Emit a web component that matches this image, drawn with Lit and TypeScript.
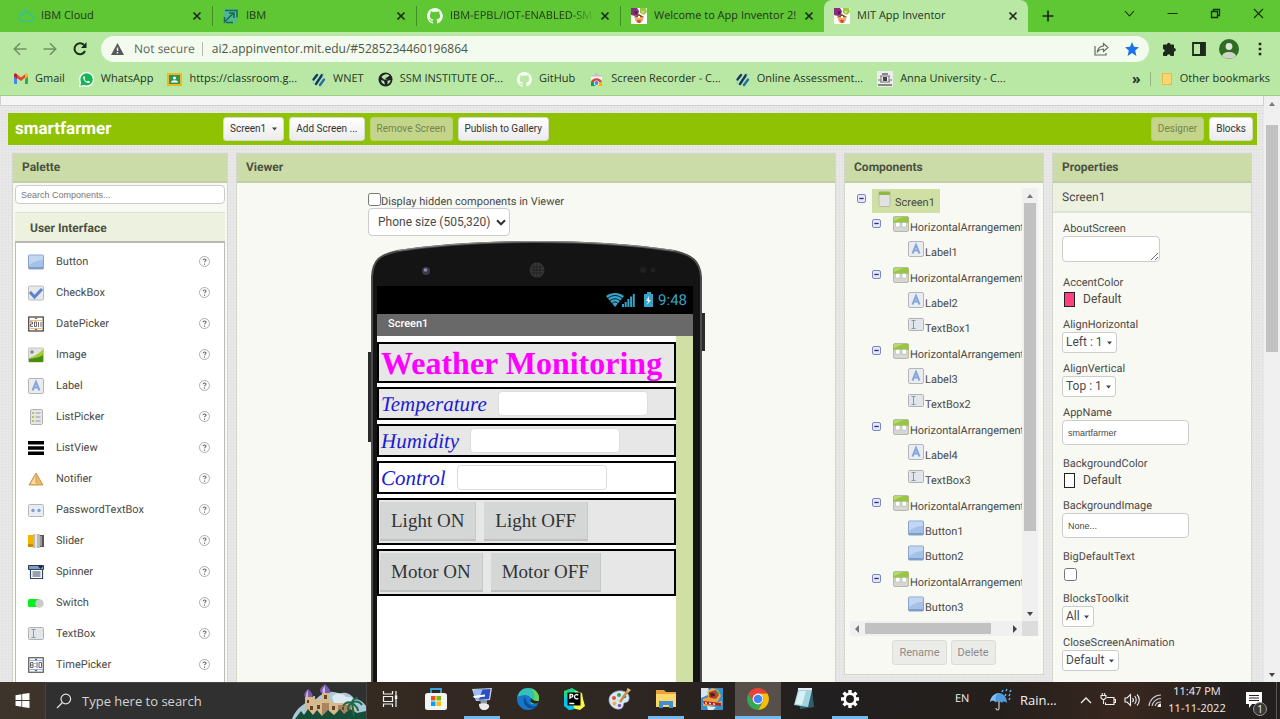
import { LitElement, html, svg, css } from "lit";
import { customElement, property } from "lit/decorators.js";
import { classMap } from "lit/directives/class-map.js";

const base = css`
  *, *::before, *::after { box-sizing: border-box; }
  button, input, select, textarea { font: inherit; color: inherit; margin: 0; }
  button { cursor: pointer; padding: 0; border: 0; background: none; }
  svg { display: block; flex: none; }
  a { color: inherit; text-decoration: none; }
  ul { list-style: none; margin: 0; padding: 0; }
  h1, h2, h3 { margin: 0; }
`;

const panel = css`
  :host {
    display: flex; flex-direction: column; min-width: 0;
    font: 11px/15px Roboto, sans-serif; color: #4a4a48; text-rendering: geometricPrecision;
    background: #f8f9f3; border: 1px solid #d3d6c8;
  }
  .title {
    flex: none; height: 29px; padding: 0 9px; font-size: 12px; line-height: 27px; font-weight: 700;
    background: #ccdca8; border-bottom: 2px solid #c3cfac; color: #4b5140;
  }
`;

const box = (size: number, view: string, body: unknown, h = size) =>
  html`<svg width=${size} height=${h} viewBox=${view} fill="none" aria-hidden="true">${body}</svg>`;

const octocat = (fill: string) => svg`<path fill=${fill} d="M8 0C3.6 0 0 3.6 0 8c0 3.5 2.300 6.500 5.500 7.600.4.100.500-.200.500-.400v-1.500c-2.200.500-2.700-.900-2.700-.900-.400-.900-.900-1.200-.900-1.200-.700-.500.100-.500.100-.500.800.100 1.200.800 1.200.800.700 1.200 1.900.900 2.300.700.100-.500.300-.900.500-1.100-1.800-.200-3.600-.900-3.600-4 0-.900.300-1.600.800-2.100-.100-.200-.400-1 .100-2.100 0 0 .700-.200 2.200.800a7.500 7.500 0 0 1 4 0c1.500-1 2.200-.800 2.200-.800.400 1.100.200 1.900.100 2.100.500.600.800 1.300.800 2.100 0 3.100-1.900 3.700-3.700 3.900.300.300.600.800.600 1.500v2.200c0 .200.100.500.600.400A8 8 0 0 0 8 0z"/>`;

const inventor = svg`<path fill="#fff" d="M0 0h16v16H0z"/><path fill="#8b2c7d" d="M0 0h6l2 3-1 4-3 1-4-1z"/><path fill="#9cc83c" d="M9 0h6l1 4-3 3-4-2z"/><path fill="#4d1c55" d="M3 3l4 1-2 3z"/><path fill="#c9dd8a" d="M10 3h4l-2 3z"/><path fill="#8a4a26" d="M3 9l5-3 5 3-1 1H4z"/><path fill="#f2a36a" d="M4 9h8v3l-2 3H6l-2-3z"/><path fill="#c4552b" d="M6 12h4l-1 3H7z"/><path fill="#fff" d="M7 8h2v2H7z"/>`;

const stripes = svg`<path stroke="#143a63" stroke-width="2.400" stroke-linecap="round" d="M2.500 7.500l3.500-4.500M5 12l6-9"/><path stroke="#2a6ca8" stroke-width="2.400" stroke-linecap="round" d="M9 13l4-5.500"/><path stroke="#8fd0e8" stroke-width="1.500" stroke-linecap="round" d="M2 11l1-1M12 3l1-1"/>`;

const icons: Record<string, unknown> = {
  cloud: box(16, "0 0 16 16", svg`<path stroke="#2fc39a" stroke-width="1.500" d="M4 13h8a3 3 0 0 0 .500-6A4.500 4.500 0 0 0 4 6.500 3.300 3.300 0 0 0 4 13z"/><path stroke="#39b6c9" d="M2 4l2 1M6 1l1 2M1 8h1"/>`),
  ibm: box(16, "0 0 16 16", svg`<path fill="#52b98a" d="M1 1h14v14H1z"/><path stroke="#176a5c" stroke-width="1.500" d="M2 2.500h12v7M3 14.500h7M1.500 9v5l9-9M6 5h5v5"/>`),
  octocatWhite: box(16, "0 0 16 16", octocat("#f4fff0")),
  inventor: box(16, "0 0 16 16", inventor),
  gmail: box(14, "0 0 14 14", svg`<path fill="#4285f4" d="M0 3.500h3V12H1a1 1 0 0 1-1-1z"/><path fill="#34a853" d="M11 4h3v7a1 1 0 0 1-1 1h-2z"/><path fill="#ea4335" d="M0 3c0-1.500 1.700-2 2.600-1L7 5.500 11.400 2C12.400 1.200 14 2 14 3.300L7 9 0 4z"/><path fill="#c5221f" d="M0 3c0-1 .800-1.600 1.800-1.500L3 2.300V7L0 4.600z"/><path fill="#fbbc04" d="M14 3c0-1-.800-1.600-1.800-1.500L11 2.300V7l3-2.400z"/>`),
  whatsapp: box(15, "0 0 15 15", svg`<circle cx="7.500" cy="7.500" r="7.500" fill="#fff"/><path fill="#fff" d="M0 15l1-5 4 4z"/><circle cx="7.600" cy="7.400" r="6.200" fill="#16b457"/><path fill="#16b457" d="M1.300 13.700l1-4 3 3z"/><path fill="#fff" d="M5.200 4c-.800.200-1.300 1.200-1 2.300.600 2.100 2.400 4 4.500 4.700 1 .300 2.200-.200 2.400-1.300l-2-1-.900.900C7.100 9.200 6 8.100 5.500 6.900l.700-.800z"/>`),
  classroom: box(15, "0 0 15 15", svg`<path fill="#f3b71b" d="M0 1h15v13H0z"/><path fill="#2d9557" d="M2 3h11v9H2z"/><circle cx="7.500" cy="6" r="1.500" fill="#fff"/><path fill="#fff" d="M4 10.500c0-3 7-3 7 0z"/>`),
  stripes: box(15, "0 0 15 15", stripes),
  globe: box(15, "0 0 15 15", svg`<circle cx="7.500" cy="7.500" r="7" fill="#202124"/><path fill="#b9e8a5" d="M7 2.500c2-.500 3.500 0 4.500 1L9 5.500 7 6l2 1.500H6L3.500 5c.500-1.200 2-2 3.500-2.500zM3 8l3 1 1 3.500C4.800 12 3.300 10.500 3 8zM12.500 8c0 2-1.500 3.800-3.500 4.300L10 10l-1-1z"/>`),
  octocat: box(15, "0 0 16 16", octocat("#f8fff5")),
  recorder: box(15, "0 0 15 15", svg`<path fill="#f1f1f1" d="M2 3h11v11H2z"/><path fill="#c4c4c4" d="M2 3h11v1.500H2zM6 1h3v2H6z"/><path fill="#db4437" d="M2 10c1-5 10-5 11 0z"/><path fill="#f4b400" d="M8 10h5v4H8z"/><path fill="#0f9d58" d="M2 10h5v4H2z"/><circle cx="7.500" cy="11" r="2.600" fill="#fff"/><circle cx="7.500" cy="11" r="1.900" fill="#4285f4"/>`),
  anna: box(16, "0 0 16 16", svg`<path fill="#ececec" d="M0 0h16v16H0z"/><path fill="#888" d="M5 2h6v2H5zM1 13h14v2H1z"/><path stroke="#777" d="M3 5h10M3 11h10M4 5v6M12 5v6M1 9h3M12 9h3"/><path fill="#444" d="M6 6h4v4H6z"/>`),
  folder: box(12, "0 0 12 14", svg`<path fill="#fbd671" d="M1 1h10v12H1z"/><path stroke="#eab844" d="M1.500 1.500h9v11h-9z"/><path fill="#eab844" d="M8 13l3-3v3z"/>`, 14),
  close: box(10, "0 0 10 10", svg`<path stroke="#1f2a1b" stroke-width="1.700" d="M1.500 1.500l7 7M8.500 1.500l-7 7"/>`),
  plus: box(12, "0 0 12 12", svg`<path stroke="#1c2a16" stroke-width="1.700" d="M6 .500v11M.500 6h11"/>`),
  chevron: box(11, "0 0 11 11", svg`<path stroke="#153007" stroke-width="1.100" d="M1 3l4.500 5L10 3"/>`),
  minimise: box(11, "0 0 11 11", svg`<path stroke="#153007" d="M.500 5.500h10"/>`),
  restore: box(11, "0 0 11 11", svg`<path stroke="#153007" stroke-width="1.300" d="M1.500 3.500h6v6h-6zM3.500 3V1.500h6v6H8"/>`),
  shut: box(11, "0 0 11 11", svg`<path stroke="#153007" stroke-width="1.100" d="M1 1l9 9M10 1l-9 9"/>`),
  back: box(14, "0 0 14 14", svg`<path stroke="#6f9363" stroke-width="1.600" d="M13.500 7H1.500M7 1.300L1.300 7 7 12.700"/>`),
  forward: box(14, "0 0 14 14", svg`<path stroke="#6f9363" stroke-width="1.600" d="M.500 7h12M7 1.300L12.700 7 7 12.700"/>`),
  reload: box(14, "0 0 14 14", svg`<path stroke="#1d2b19" stroke-width="2" d="M12 9a5.500 5.500 0 1 1-1-6"/><path fill="#1d2b19" d="M13.500 0v6H8z"/>`),
  warn: box(13, "0 0 13 12", svg`<path fill="#55595a" d="M6.500 0L13 12H0z"/><path fill="#f3fbee" d="M5.800 4.500h1.400v3.500H5.800zM5.800 9h1.400v1.400H5.800z"/>`, 12),
  share: box(15, "0 0 15 15", svg`<path stroke="#5f6a5d" stroke-width="1.200" d="M1 5v9h11v-2M3.500 10.500C4 7 6 5.300 9.500 5V2.500l4.500 4-4.500 4V8c-2.500 0-4.500.700-6 2.500z"/>`),
  star: box(14, "0 0 14 14", svg`<path fill="#1a73e8" d="M7 0l2 4.800 5 .400-3.800 3.300L11.400 14 7 11.100 2.600 14l1.200-5.500L0 5.200l5-.400z"/>`),
  puzzle: box(14, "0 0 14 14", svg`<path fill="#1d2a1b" d="M5 2.500a1.700 1.700 0 0 1 3.400 0H11c.600 0 1 .400 1 1v2.400a1.700 1.700 0 0 1 0 3.700V13c0 .500-.400 1-1 1H8.500a1.700 1.700 0 0 0-3.500 0H2c-.600 0-1-.500-1-1v-2.600c2.200 0 2.200-3.400 0-3.400V3.500c0-.600.400-1 1-1z"/>`),
  side: box(14, "0 0 14 14", svg`<path stroke="#1d2a1b" stroke-width="1.800" d="M1 1h12v12H1z"/><path fill="#1d2a1b" d="M8 1h5v12H8z"/>`),
  avatar: box(20, "0 0 20 20", svg`<circle cx="10" cy="10" r="10" fill="#2f6d23"/><circle cx="10" cy="7.500" r="3.400" fill="#dfe4dc"/><path fill="#cdd5c9" d="M3 17c1-5.500 13-5.500 14 0a10 10 0 0 1-14 0z"/>`),
  dots: box(4, "0 0 4 14", svg`<path fill="#1d2a1b" d="M.700.700h2.600v2.600H.700zM.700 5.700h2.600v2.600H.700zM.700 10.700h2.600v2.600H.700z"/>`, 14),

  button: box(16, "0 0 16 16", svg`<rect x=".5" y="1" width="15" height="14" rx="1" fill="#a3c1e9" stroke="#8ba3c4"/><path fill="#c0d6f2" d="M1 1.500h14V6C9 6 5 8 1 11z"/><path fill="#7f9dc9" d="M1 13h14v2H1z"/>`),
  checkbox: box(16, "0 0 16 16", svg`<rect x=".5" y="1" width="15" height="14" rx="1" fill="#e5e8ed" stroke="#bdbdbd"/><path stroke="#5b84cb" stroke-width="3" d="M2 7l4.500 5L14 4"/>`),
  date: box(16, "0 0 16 16", svg`<rect x=".75" y="1" width="14.500" height="14" fill="#fff" stroke="#44362e" stroke-width="1.200"/><path stroke="#efb684" d="M1.500 4.500h13M1.500 12.500h13"/><path fill="#7a4a20" d="M6.500 3L8 1.500 9.500 3zM6.500 13L8 14.500 9.500 13z"/><path stroke="#555" stroke-width=".9" d="M2 6h2.500v2H2.500v2.500H5M6.500 6v4.500h2V6zM10.500 6v5M13 6v5"/>`),
  image: box(16, "0 0 16 16", svg`<rect x=".5" y="1" width="15" height="14" rx="1" fill="#e3e3e3" stroke="#c4c4c4"/><path fill="#9fcc2f" d="M1 11C5 10 9 8 15 2.500V15H1z"/><path fill="#4a8a0e" d="M1 12c5-1 10-1 14-4v7H1z"/><circle cx="4" cy="5" r="1.800" fill="#888"/>`),
  label: box(16, "0 0 16 16", svg`<rect x=".5" y=".5" width="15" height="15" rx="1.500" fill="#e9edf2" stroke="#b5b5b5"/><path stroke="#86a5d9" stroke-width="2" d="M4.500 12.500L8 4l3.500 8.500M6 9.500h4"/>`),
  listpicker: box(16, "0 0 16 16", svg`<rect x="2.500" y=".5" width="12" height="15" rx="1.500" fill="#e6e6e6" stroke="#b0b0b0"/><path stroke="#b7c65b" stroke-width="2" d="M4 4h2M4 8h2M4 12h2"/><path stroke="#9a9a9a" d="M7.500 4h5M7.500 8h5M7.500 12h5"/>`),
  listview: box(16, "0 0 16 16", svg`<path fill="#000" d="M0 1h16v3.500H0zM0 6.300h16v3.500H0zM0 11.500h16V15H0z"/>`),
  notifier: box(16, "0 0 16 16", svg`<path fill="#efb865" stroke="#b78646" stroke-width=".8" d="M8 2l7 12H1z"/><path fill="#f9dca4" d="M8 4v9H3z"/><path fill="#d9a055" d="M7.500 5h1.200v7H7.500z"/>`),
  password: box(16, "0 0 16 16", svg`<rect x=".5" y="2.500" width="15" height="12" rx="1" fill="#e8edf4" stroke="#b7b7b7"/><circle cx="5" cy="8.500" r="1.700" fill="#7d9fd6"/><circle cx="11" cy="8.500" r="1.700" fill="#7d9fd6"/>`),
  slider: box(16, "0 0 16 16", svg`<path fill="#f1b500" d="M0 2h6v12H0z"/><path fill="#c98c00" d="M0 11h6v3H0z"/><path fill="#555" d="M10 2h6v12h-6z"/><path fill="#999" d="M12 3h2v10h-2z"/><rect x="5" y="1" width="7" height="14" rx="1" fill="#b9b9b9"/><path fill="#e8e8e8" d="M7 1h2v14H7z"/>`),
  spinner: box(16, "0 0 16 16", svg`<path fill="#7f9dc4" stroke="#27384f" d="M.500 1.500h15v4H.500z"/><path fill="#15253c" d="M10 2h5l-2.500 3z"/><path fill="#fff" stroke="#33465f" stroke-width="1.200" d="M2.500 5.500h12v9h-12z"/><path stroke="#33465f" d="M4.500 8h8M4.500 10h8M4.500 12h8"/>`),
  switch: box(16, "0 0 16 16", svg`<rect y="4" width="12" height="8" rx="1.500" fill="#07f01c"/><circle cx="11.500" cy="8.500" r="4.300" fill="#c9cbc9"/>`),
  textbox: box(16, "0 0 16 16", svg`<rect x=".5" y="1.500" width="15" height="12" rx="1" fill="#e2e5e9" stroke="#b2b2b2"/><path stroke="#8a9ab0" d="M3.500 3.500h4M5.500 3.500v8M3.500 11.500h4"/>`),
  time: box(16, "0 0 16 16", svg`<rect x=".75" y=".75" width="14.500" height="14.500" fill="#fff" stroke="#555" stroke-width="1.200"/><path stroke="#8db1df" d="M1.500 3.500h13M1.500 12.500h13"/><path fill="#456" d="M6.500 3L8 1.500 9.500 3zM6.500 13L8 14.500 9.500 13z"/><path stroke="#555" stroke-width=".9" d="M2.500 5.500h2.500v5H2.500zM2.500 8H5M7 6v1M7 9v1M9 5v6M11 5.500h2.500v5H11z"/>`),
  arrangement: box(16, "0 0 16 16", svg`<rect x=".5" y=".5" width="15" height="15" rx="1.500" fill="#d6d6d6" stroke="#b5b9a8"/><path fill="#98c543" d="M.500 1h15v6H.500z"/><path fill="#b6da6d" d="M1 1h9L1 5z"/><path fill="#fff" stroke="#b4b9a8" stroke-width=".6" d="M2.500 6.500h4.500v4.500H2.500zM9 6.500h4.500v4.500H9z"/>`),
  screen: box(16, "0 0 16 16", svg`<rect x="3" y=".5" width="11" height="15" rx="1" fill="#e2e2e2" stroke="#b8bda6"/><path fill="#8bbb3b" d="M3 1h11v3H3z"/>`),
  minus: box(9, "0 0 9 9", svg`<rect x=".5" y=".5" width="8" height="8" rx="1.500" fill="#e6e8fa" stroke="#7f86c6"/><path stroke="#2b2f8f" stroke-width="1.300" d="M2.300 4.500h4.400"/>`),
  help: box(11, "0 0 11 11", svg`<circle cx="5.500" cy="5.500" r="5" fill="#fff" stroke="#9a9a9a" stroke-width=".8"/><path stroke="#666" stroke-width="1.100" d="M4 4.300c.200-1.800 3.200-1.500 3 0-.100.900-1.400.900-1.400 2M5.500 7.500v1.200"/>`),
  caret: box(5, "0 0 5 4", svg`<path fill="#444" d="M0 .500h5L2.500 3.500z"/>`, 4),
  down: box(10, "0 0 10 7", svg`<path stroke="#333" stroke-width="2" d="M1 1.300l4 4 4-4"/>`, 7),

  start: box(15, "0 0 13 14", svg`<path fill="#fff" d="M0 2l5.500-.800v5.400H0zM6.200 1L13 0v6.600H6.200zM0 7.400h5.500v5.400L0 12zM6.200 7.400H13V14l-6.800-1z"/>`),
  search: box(16, "0 0 16 16", svg`<circle cx="9.800" cy="6" r="4.800" stroke="#e3e3e3" stroke-width="1.200"/><path stroke="#e3e3e3" stroke-width="1.200" d="M6.500 9.500L1 15"/>`),
  castle: box(76, "0 0 76 36", svg`<path fill="#a9c9d8" d="M2 36C6 25 16 18 26 16c8-8 16-9 24-5 4-3 12 0 14 5 6 0 9 3 12 7v13z"/><path fill="#dbeaf0" d="M42 14c4-5 10-5 14 0 6-1 9 3 9 6H44z"/><path fill="#d7b98c" d="M15 14h8v-1h2v4h7V9h7v9l6 2h16l5 4v9H15z"/><path fill="#a98561" d="M32 20h7v13h-7zM48 22h13v10H48z"/><path fill="#7a5bab" d="M18 6c-3 3-5 6-3 8h7c2-2-1-5-4-8zM35 1c-5 4-6 6-4 9h9c1-3-1-5-5-9z"/><path fill="#cbb4e6" d="M18 7c-2 3-2 5-2 7h2zM35 3c-3 3-3 5-2 7h2z"/><path fill="#5d4530" d="M17 17h2v3h-2zM34 12h3v4h-3zM20 23h3v4h-3zM27 22h3v4h-3zM42 23h3v4h-3zM52 24h2v3h-2z"/><path fill="#164d38" d="M5 36l6-8 3 4 4-6 5 6 4-5 5 6 6-6 6 5 6-6 4 5 6-5 7 4 9-2v8z"/><path stroke="#1a6a4c" stroke-width="2" d="M64 33l-2-13M62 20c-4-2-7 0-9 3M62 20c4-3 8-1 10 2M62 20c-3 1-4 4-4 7M62 20c3 2 6 5 6 8M62 20c0-3 3-5 6-5"/>`, 36),
  taskview: box(16, "0 0 16 16", svg`<path stroke="#f0f0f0" stroke-width="1.200" d="M1.500 0v3h9V0M1.500 16v-3h9v3M1.500 5.500h9v5h-9zM14 0v16"/><path fill="#f0f0f0" d="M12.800 4.500h2.500V8h-2.500z"/>`),
  store: box(22, "0 0 22 24", svg`<path stroke="#36a6e0" stroke-width="1.800" d="M6 8V2h10v6"/><rect y="6" width="22" height="17" rx="2.500" fill="#f3f3f3"/><path fill="#f25022" d="M6 9h4.500v4.500H6z"/><path fill="#7fba00" d="M11.500 9H16v4.500h-4.500z"/><path fill="#00a4ef" d="M6 14.500h4.500V19H6z"/><path fill="#ffb900" d="M11.500 14.500H16V19h-4.500z"/>`, 24),
  pc: box(24, "0 0 24 24", svg`<path fill="#cfd6e0" d="M2 2l20-1-2 12-14 1z"/><path fill="#2d4fc4" d="M3.500 3L20.500 2 19 12 7 13z"/><path fill="#9ac0ff" d="M3.500 3l9-.500L9 12.800H7z"/><path fill="#fff" d="M3 9l12-1.500v2L4 11z"/><path fill="#8e97a8" d="M10 13h7l0 4h-6z"/><path fill="#e9ebee" d="M9 17c3-1.500 8-1 10 1 1 3-2 5-5 5s-5-2-5-6z"/>`),
  edge: box(22, "0 0 22 22", svg`<circle cx="11" cy="11" r="11" fill="#1477c9"/><path fill="#35c1b5" d="M.500 9C2 3 6 0 11 0c7 0 11 5 11 10 0 4-3 6-6 6-2 0-3-1-2-3 1-3-2-6-6-6-3 0-6 1-7.500 2z"/><path fill="#6fd64a" d="M14 .500C19 2 22 6 22 10c0 4-3 6-6 6-2 0-2-1-2-2 5 0 5-8 0-13.500z"/><path fill="#0c4f9e" d="M8 9c-3 3-1 9 4 11 3 1 6 0 8-2-6 2-11-3-12-9z"/><path fill="#2a241f" d="M14 14c-1-1 0-2 0-4 3 3 4 3 8 3-1 3-5 4-8 1z"/>`),
  pycharm: box(22, "0 0 22 22", svg`<path fill="#21d789" d="M1 3l8-3 7 4-2 16-8 2-5-7z"/><path fill="#fcf84a" d="M12 3l7 2 1 6 2 7-5 4-8-2z"/><path fill="#07c3f2" d="M1 10l5 0 6 11-6 1-5-4z"/><path fill="#000" d="M4.500 4.500h13v13h-13z"/><path stroke="#fff" stroke-width="1.300" d="M7 11V6.500h1.500a1.300 1.300 0 0 1 0 2.700H7M15.300 7.200c-2-1.500-3.800-.300-3.800 1.500s2 3 3.800 1.500M6.300 15.500h5"/>`),
  paint: box(24, "0 0 24 24", svg`<path fill="#d9e8f3" stroke="#8fb1c9" stroke-width=".7" d="M10 4c7-1 12 3 11 8-.500 4-4 3-5 4s0 5-4 6C6 23 1 18 1 13S5 5 10 4z"/><circle cx="6" cy="11" r="2" fill="#e24a3b"/><circle cx="11" cy="8" r="2" fill="#3c9c4d"/><circle cx="16.500" cy="9.500" r="1.800" fill="#2f6fd0"/><circle cx="6.500" cy="16.500" r="2" fill="#f0b429"/><circle cx="11.500" cy="18.500" r="1.700" fill="#8d4cb5"/><path stroke="#c98a45" stroke-width="2.500" d="M12 15L21 2"/><path fill="#e8c07d" d="M19 1l4 2-3 3z"/>`),
  explorer: box(22, "0 0 22 20", svg`<path fill="#e8a33d" d="M1 1h8l2 2h10v5H1z"/><path fill="#fcd76a" d="M1 5h20v13H1z"/><path fill="#3f8fd2" d="M4 19v-7h14v7h-4v-3H8v3z"/>`, 20),
  game: box(22, "0 0 22 22", svg`<path fill="#3a8fc9" d="M0 0h22v22H0z"/><path fill="#d8e7ee" d="M0 0h7l2 6-9 4z"/><path fill="#e2b04a" d="M6 4l5-4 6 2 3 6-4 6-8-2z"/><path fill="#c43b2b" d="M8 4l7-2 3 5-3 4-7-1z"/><path fill="#3a2a22" d="M9 5l4 0 1 3-4 1z"/><path fill="#2f9a55" d="M15 2l3 3-2 3z"/><path fill="#e9a23c" d="M2 11l6-2 8 5 5-1v4l-19 1z"/><path fill="#b32121" d="M2 13l18 2v3L3 16z"/><path fill="#f6dfd2" d="M4 14l2 .500v1.500l-2-.500zM8 14.500l2 .500v1.500l-2-.500zM12 15l2 .500v1.500l-2-.500z"/><path fill="#dfe9ef" d="M6 18l9 1-3 3H7z"/>`),
  chrome: box(22, "0 0 22 22", svg`<path fill="#ea4335" d="M11 0a11 11 0 0 1 9.500 5.500H11L6.200 13.700 1.500 5.500A11 11 0 0 1 11 0z"/><path fill="#fbbc05" d="M20.500 5.500A11 11 0 0 1 11 22l4.800-8.300a5.500 5.500 0 0 0 0-5.500L11 5.500z"/><path fill="#34a853" d="M11 22A11 11 0 0 1 1.500 5.500l4.700 8.200a5.500 5.500 0 0 0 9.600 0z"/><circle cx="11" cy="11" r="5.400" fill="#fff"/><circle cx="11" cy="11" r="4.300" fill="#4285f4"/>`),
  notepad: box(22, "0 0 22 22", svg`<path fill="#2f5f6c" d="M6 2l13 0 2 17-14 2z"/><path fill="#9fd3dd" d="M5 2h14l-4 17-14-2z"/><path fill="#d9f0f4" d="M6 3h7L9 17l-7-1z"/><path fill="#e9eef0" d="M5 0h14v2H5z"/>`),
  gear: box(20, "0 0 20 20", svg`<circle cx="10" cy="10" r="5.300" stroke="#fff" stroke-width="2.600"/><path stroke="#fff" stroke-width="3.400" d="M10 1v3M10 16v3M1 10h3M16 10h3M3.600 3.600l2.200 2.200M14.200 14.200l2.200 2.200M3.600 16.400l2.200-2.200M14.200 5.800l2.200-2.200"/>`),
  umbrella: box(24, "0 0 24 24", svg`<path fill="#4e9be0" d="M1 14C2 7 7 5 10 5s8 3 8 10c-2-2-4-2-5 0-1-2-5-2-6-.500C5 12 3 12 1 14z"/><path fill="#83c0f2" d="M1 14C2 8 6 6 9 5c-3 3-3 6-2 9.500C5 12 3 12 1 14z"/><path stroke="#bcbcbc" stroke-width="1.300" d="M10 13v7c0 2.500-3 2.500-3 0"/><path stroke="#5eb4f5" stroke-width="1.500" d="M14 2l-1 2M18 1l-1 2M22 2l-1 2M17 6l-1 2M21 6l-1 2M21 10l-1 2"/>`),
  up: box(12, "0 0 12 8", svg`<path stroke="#f0f0f0" stroke-width="1.300" d="M1 7l5-5 5 5"/>`, 8),
  battery: box(16, "0 0 16 14", svg`<path stroke="#f0f0f0" stroke-width="1.100" d="M7 4.500h7v7H5.500V9.500M14 6.500h1.500v3H14M1 2.500h5V5L3.500 7 1 5zM2.300 2.500V0M4.700 2.500V0M3.500 7v4"/>`, 14),
  volume: box(16, "0 0 16 14", svg`<path stroke="#f0f0f0" stroke-width="1.100" d="M1 5h2l3.500-3.500v11L3 9H1zM8.500 5c1 1.200 1 3 0 4M10.700 3c2 2.200 2 5.800 0 8M13 1.500c3 3 3 8 0 11"/>`, 14),
  wifi: box(14, "0 0 14 14", svg`<path stroke="#cfcfcf" stroke-width="1.100" d="M1 13A12 12 0 0 1 13 2M4 13a9 9 0 0 1 9-7.500M7 13a6 6 0 0 1 6-4"/><path fill="#f0f0f0" d="M13 10.500V14H9.500A3.500 3.500 0 0 1 13 10.500z"/>`),
  note: box(18, "0 0 18 18", svg`<path fill="#fff" d="M1 1h16v12H7l-3 4v-4H1z"/><path stroke="#2a2523" stroke-width="1.200" d="M4 4.500h10M4 7h10M4 9.500h10"/>`),
};

@customElement("browser-chrome")
class BrowserChrome extends LitElement {
  static styles = [base, css`
    :host { display: block; flex: none; font: 12px/16px "Open Sans", sans-serif; color: #24331f; background: #b9e8a5; border-bottom: 1px solid #9fcb8d; text-rendering: geometricPrecision; }
    .tabs { display: flex; height: 32px; background: #5fc634; padding-left: 8px; }
    .tab { position: relative; flex: 0 1 204px; display: flex; align-items: center; padding: 0 10px; min-width: 0; }
    .tab + .tab { border-left: 1px solid #3f8f25; border-image: linear-gradient(transparent 7px, #3f8f25 7px 25px, transparent 25px) 1; }
    .name { flex: 1; margin-left: 7px; overflow: hidden; white-space: nowrap; font-size: 11px; }
    .name.long { margin-right: 6px; mask-image: linear-gradient(90deg, #000 85%, transparent); }
    .tab + .tab.active { background: #b9e8a5; border-radius: 8px 8px 0 0; border-image: none; border-left: 0; }
    .new { width: 40px; display: grid; place-items: center; }
    .window { margin-left: auto; display: flex; height: 27px; }
    .window button { width: 43px; display: grid; place-items: center; }
    .toolbar { display: flex; align-items: center; height: 33px; padding: 0 4px 0 5px; }
    .nav { width: 30px; display: grid; place-items: center; }
    .address { flex: 1; display: flex; align-items: center; height: 26px; margin: 0 5px 0 6px; padding: 0 10px; background: #f3fbee; border-radius: 13px; }
    .secure { font-size: 12px; color: #5c665a; padding: 0 7px 0 10px; white-space: nowrap; }
    .url { flex: 1; min-width: 0; border: 0; border-left: 1px solid #b4bcb0; height: 14px; padding: 0 9px; font-size: 12px; background: none; outline: 0; color: #4b5648; }
    .address .end { width: 30px; display: grid; place-items: center; }
    .address .end:last-child { width: 15px; margin-left: 8px; }
    .tool { width: 30px; display: grid; place-items: center; }
    .tool:last-child { width: 32px; }
    .marks { display: flex; align-items: center; height: 30px; padding: 0 10px 2px 14px; gap: 14px; white-space: nowrap; font-size: 11px; }
    .mark { display: flex; align-items: center; gap: 7px; }
    .more { margin-left: auto; font-size: 14px; font-weight: 700; padding-right: 9px; border-right: 1px solid #8fb880; line-height: 14px; }
    .other { margin-left: -4px; }
  `];
  tabs = [["cloud", "IBM Cloud"], ["ibm", "IBM"], ["octocatWhite", "IBM-EPBL/IOT-ENABLED-SMA"], ["inventor", "Welcome to App Inventor 2!"], ["inventor", "MIT App Inventor"]];
  marks = [["gmail", "Gmail"], ["whatsapp", "WhatsApp"], ["classroom", "https://classroom.g..."], ["stripes", "WNET"], ["globe", "SSM INSTITUTE OF..."], ["octocat", "GitHub"], ["recorder", "Screen Recorder - C..."], ["stripes", "Online Assessment..."], ["anna", "Anna University - C..."]];
  render() {
    return html`
      <div class="tabs">
        ${this.tabs.map(([icon, name], i) => html`
          <div class=${classMap({ tab: true, active: i === 4 })}>
            ${icons[icon]}<span class=${classMap({ name: true, long: i === 2 })}>${name}</span>
            <button aria-label="Close tab">${icons.close}</button>
          </div>`)}
        <button class="new" aria-label="New tab">${icons.plus}</button>
        <div class="window">
          ${["chevron", "minimise", "restore", "shut"].map((n) => html`<button aria-label=${n}>${icons[n]}</button>`)}
        </div>
      </div>
      <div class="toolbar">
        ${["back", "forward", "reload"].map((n) => html`<button class="nav" aria-label=${n}>${icons[n]}</button>`)}
        <div class="address">
          ${icons.warn}<span class="secure">Not secure</span>
          <input class="url" aria-label="Address" value="ai2.appinventor.mit.edu/#5285234460196864">
          <button class="end" aria-label="Share">${icons.share}</button>
          <button class="end" aria-label="Bookmark">${icons.star}</button>
        </div>
        ${["puzzle", "side", "avatar", "dots"].map((n) => html`<button class="tool" aria-label=${n}>${icons[n]}</button>`)}
      </div>
      <nav class="marks">
        ${this.marks.map(([icon, name]) => html`<a class="mark" href="#">${icons[icon]}<span>${name}</span></a>`)}
        <button class="more" aria-label="More bookmarks">»</button>
        <a class="mark other" href="#">${icons.folder}<span>Other bookmarks</span></a>
      </nav>`;
  }
}

@customElement("project-bar")
class ProjectBar extends LitElement {
  static styles = [base, css`
    :host { display: flex; align-items: center; height: 32px; padding: 0 4px 0 7px; background: #8fc202; font: 10px/14px Roboto, sans-serif; color: #333; text-rendering: geometricPrecision; }
    h1 { width: 208px; font-size: 17px; line-height: 34px; font-weight: 700; color: #fff; }
    .group { display: flex; gap: 5px; }
    .group.end { margin-left: auto; }
    button { display: flex; align-items: center; gap: 6px; height: 24px; padding: 0 6px; border: 1px solid #d5d8cb; border-radius: 3px; background: linear-gradient(#fff, #ebebeb); white-space: nowrap; }
    button:disabled { background: #c3d58a; border-color: #b9cf76; color: #76864a; }
  `];
  render() {
    return html`
      <h1>smartfarmer</h1>
      <div class="group">
        <button>Screen1 ${icons.caret}</button>
        <button>Add Screen ...</button>
        <button disabled>Remove Screen</button>
        <button>Publish to Gallery</button>
      </div>
      <div class="group end"><button disabled>Designer</button><button>Blocks</button></div>`;
  }
}

@customElement("palette-panel")
class PalettePanel extends LitElement {
  static styles = [base, panel, css`
    :host { border-bottom: 0; }
    .find { height: 19px; margin: 2px 2px 8px 2px; padding: 0 5px; border: 1px solid #ccc; border-radius: 4px; background: #fff; font: 9px/12px "Liberation Sans", sans-serif; outline: 0; }
    .find::placeholder { color: #777; opacity: 1; }
    .group { height: 31px; margin: 0 2px; padding-left: 15px; font-size: 12px; line-height: 30px; background: #edf1e0; border-top: 1px solid #dfe3d3; border-bottom: 2px solid #b9bbb3; color: #4b5140; }
    ul { flex: 1; margin: 0 2px; padding: 3px 14px 0 12px; background: #fff; border: solid #bcbdb8; border-width: 0 1px; }
    li { display: flex; align-items: center; gap: 12px; height: 31px; }
    li span { flex: 1; }
  `];
  items = [["button", "Button"], ["checkbox", "CheckBox"], ["date", "DatePicker"], ["image", "Image"], ["label", "Label"], ["listpicker", "ListPicker"], ["listview", "ListView"], ["notifier", "Notifier"], ["password", "PasswordTextBox"], ["slider", "Slider"], ["spinner", "Spinner"], ["switch", "Switch"], ["textbox", "TextBox"], ["time", "TimePicker"]];
  render() {
    return html`
      <h2 class="title">Palette</h2>
      <input class="find" type="text" aria-label="Search Components" placeholder="Search Components...">
      <h3 class="group">User Interface</h3>
      <ul>${this.items.map(([icon, name]) => html`<li>${icons[icon]}<span>${name}</span><button aria-label="Help: ${name}">${icons.help}</button></li>`)}</ul>`;
  }
}

@customElement("viewer-panel")
class ViewerPanel extends LitElement {
  static styles = [base, panel, css`
    :host { border-bottom: 0; }
    .body { padding: 10px 0 0 131px; }
    .hidden { display: flex; align-items: center; height: 15px; }
    .hidden input { width: 13px; height: 13px; margin-bottom: 3px; }
    .hidden span { padding-top: 1px; }
    .size { position: relative; display: inline-flex; align-items: center; width: 142px; }
    .size select { appearance: none; width: 100%; height: 28px; padding: 0 9px; font-size: 12px; background: #fff; border: 1px solid #ccc; border-radius: 4px; }
    .size svg { position: absolute; right: 4px; pointer-events: none; }
    .phone { position: relative; width: 337px; height: 600px; margin-top: 5px; padding: 45px 12px 0 9px; }
    .case { position: absolute; left: 0; top: 0; }
    .face { position: relative; }
    .status { display: flex; align-items: center; justify-content: flex-end; gap: 5px; height: 28px; padding-right: 6px; color: #38a3c8; font-size: 15px; background: #000; }
    .bar { height: 22px; padding-left: 11px; line-height: 19px; background: #696969; color: #fff; font-weight: 500; }
    .work { height: 500px; background: #fff; border-right: 17px solid #d0dfa3; padding-top: 6px; display: flex; flex-direction: column; gap: 4px; font-family: "Liberation Serif", serif; }
    .row { display: flex; align-items: center; gap: 8px; padding: 2px; height: 33px; border: 2px solid #000; background: #e7e7e7; color: #1c1ccf; font-size: 21px; line-height: 24px; font-style: italic; white-space: nowrap; }
    .row.plain { background: #fff; }
    .row.head { height: 41px; color: #f0f; font-size: 32px; line-height: 36px; font-weight: 700; font-style: normal; }
    .row.acts { height: 47px; padding: 0 1px; }
    .row label { padding-right: 3px; }
    .row input { width: 150px; height: 25px; border: 1px solid #ddd; border-radius: 4px; background: #fff; }
    .row button { height: 39px; padding: 0 11px; background: #d5d7d6; border-bottom: 2px solid #bfc1c0; border-right: 1px solid #c6c8c7; font-size: 19px; font-style: normal; color: #333; }
  `];
  fields = [["Temperature", false], ["Humidity", false], ["Control", true]] as [string, boolean][];
  render() {
    return html`
      <h2 class="title">Viewer</h2>
      <div class="body">
        <label class="hidden"><input type="checkbox"><span>Display hidden components in Viewer</span></label>
        <div class="size"><select aria-label="Device size"><option>Phone size (505,320)</option></select>${icons.down}</div>
        <div class="phone">
          <svg class="case" width="337" height="600" viewBox="0 0 337 600" fill="none">
            <path fill="#2b2b2b" d="M0 111h4v90H0zM334 72h3v38h-3z"/>
            <path fill="#141414" stroke="#4c4c4c" stroke-width="2" d="M4 600V36C5 18 12 14 30 10 110-2 226-2 306 10c18 4 26 10 27 26v564"/>
            <path stroke="#8b8b8b" d="M30 9.500C110-2.500 226-2.500 306 9.500"/>
            <circle cx="58" cy="30" r="4" fill="#3b3a48"/><circle cx="57.500" cy="29" r="1.800" fill="#8b88b5"/>
            <circle cx="169" cy="29" r="7.500" fill="#383838"/><path stroke="#222" d="M163 26h12M162 29h14M163 32h12M166 23v12M169 22v14M172 23v12"/>
            <circle cx="275" cy="29" r="3" fill="#202020"/><circle cx="285" cy="29" r="2.500" fill="#202020"/>
          </svg>
          <div class="face">
            <div class="status">
              <svg width="47" height="16" viewBox="0 0 47 16" fill="#38a3c8">
                <path d="M0 4C5 0 13 0 18 4L9 15z"/><path stroke="#000" stroke-width=".8" fill="none" d="M1.500 6.500c5-4 10-4 15 0M3.500 9c4-3 7-3 11 0M6 11.500c2-2 4-2 6 0"/>
                <path d="M16 15h2v-3h-2zM18.700 15h2v-5h-2zM21.400 15h2V7h-2zM24.100 15h2V4.500h-2zM26.800 15h2V2h-2z"/>
                <path d="M38 2h3V0h4v2h2v13h-9z"/><path fill="#dff4fb" d="M43 4l-3 5h2l-1 4 4-5h-2z"/>
              </svg>
              <span>9:48</span>
            </div>
            <div class="bar">Screen1</div>
            <div class="work">
              <div class="row head">Weather Monitoring</div>
              ${this.fields.map(([name, plain]) => html`
                <div class=${classMap({ row: true, plain })}><label for=${name}>${name}</label><input id=${name} type="text"></div>`)}
              <div class="row acts"><button>Light ON</button><button>Light OFF</button></div>
              <div class="row acts"><button>Motor ON</button><button>Motor OFF</button></div>
            </div>
          </div>
        </div>
      </div>`;
  }
}

@customElement("scroll-track")
class ScrollTrack extends LitElement {
  @property({ type: Boolean, reflect: true }) across = false;
  static styles = [base, css`
    :host { display: grid; background: #f0f0f0; grid-template: 15px var(--before, 0px) var(--thumb, 1fr) 1fr 15px / 100%; }
    :host([across]) { grid-template: 100% / 15px var(--before, 0px) var(--thumb, 1fr) 1fr 15px; }
    span { display: grid; place-items: center; }
    .thumb { background: #c1c1c1; margin: 0 2px; }
    :host([across]) .thumb { margin: 2px 0; }
  `];
  render() {
    const [a, b] = this.across ? ["M5 0v8L1 4z", "M2 0v8l4-4z"] : ["M1 6h6L4 2z", "M1 2h6L4 6z"];
    const arrow = (d: string, fill: string) => html`<span>${box(8, "0 0 8 8", svg`<path fill=${fill} d=${d}/>`)}</span>`;
    return html`${arrow(a, "#777")}<i></i><div class="thumb"></div><i></i>${arrow(b, "#444")}`;
  }
}

@customElement("components-panel")
class ComponentsPanel extends LitElement {
  static styles = [base, panel, css`
    .area { display: grid; grid-template: 433px 15px / minmax(0, 1fr) 16px; margin: 5px 5px 4px 5px; }
    .tree { overflow: hidden; padding-left: 7px; white-space: nowrap; }
    .node { display: flex; align-items: center; gap: 1px; height: 25px; }
    .node svg { margin-bottom: 4px; }
    .node span { padding-top: 3px; }
    .toggle { margin-right: 11px; }
    .root { display: flex; align-items: center; gap: 3px; height: 24px; padding: 0 5px 0 4px; background: #d0dfa3; }
    .root-toggle { margin-right: 5px; }
    .branch { margin-bottom: 1px; padding-left: 15px; }
    .leaf { padding-left: 36px; }
    .down { --thumb: 328px; }
    .across { --thumb: 126px; }
    .corner { background: #dcdcdc; }
    .acts { display: flex; justify-content: center; gap: 4px; padding-bottom: 9px; }
    .acts button { height: 25px; padding: 0 6px; border: 1px solid #dcdcd6; border-radius: 3px; background: #ebebe7; color: #8c8c8c; }
  `];
  tree = [
    [["label", "Label1"]],
    [["label", "Label2"], ["textbox", "TextBox1"]],
    [["label", "Label3"], ["textbox", "TextBox2"]],
    [["label", "Label4"], ["textbox", "TextBox3"]],
    [["button", "Button1"], ["button", "Button2"]],
    [["button", "Button3"]],
  ];
  render() {
    return html`
      <h2 class="title">Components</h2>
      <div class="area">
        <div class="tree">
          <div class="node"><button class="root-toggle" aria-label="Collapse">${icons.minus}</button><div class="root">${icons.screen}<span>Screen1</span></div></div>
          ${this.tree.map((kids, i) => html`
            <div class="branch">
              <div class="node"><button class="toggle" aria-label="Collapse">${icons.minus}</button>${icons.arrangement}<span>HorizontalArrangement${i + 1}</span></div>
              ${kids.map(([icon, name]) => html`<div class="node leaf">${icons[icon]}<span>${name}</span></div>`)}
            </div>`)}
        </div>
        <scroll-track class="down"></scroll-track>
        <scroll-track class="across" across></scroll-track>
        <div class="corner"></div>
      </div>
      <div class="acts"><button disabled>Rename</button><button disabled>Delete</button></div>`;
  }
}

type Prop = { name: string; kind: "area" | "color" | "pick" | "text" | "check"; value?: string };

@customElement("properties-panel")
class PropertiesPanel extends LitElement {
  static styles = [base, panel, css`
    :host { border-bottom: 0; }
    .sub { height: 30px; padding: 0 9px; line-height: 29px; background: #edf1e0; border-bottom: 2px solid #e0e3d8; font-size: 12px; }
    .list { padding: 8px 9px 0; }
    .prop { margin-bottom: 9px; }
    .name { display: block; padding-left: 1px; height: 15px; }
    .area { height: 30px; }
    .text { height: 27px; }
    .check, .color { height: 18px; }
    .pick { height: 20px; }
    textarea { display: block; width: 98px; height: 26px; border: 1px solid #ccc; border-radius: 4px; background: #fff; outline: 0; }
    .text input { display: block; width: 127px; height: 25px; padding: 0 5px; border: 1px solid #ccc; border-radius: 4px; background: #fff; font: 9px/12px "Liberation Sans", sans-serif; outline: 0; }
    .color button { display: flex; align-items: center; gap: 8px; height: 18px; padding-left: 2px; font-size: 12px; }
    .chip { width: 11px; height: 15px; border: 1px solid #222; background: #fff; }
    .chip.accent { background: #ff4081; }
    .check input { width: 13px; height: 13px; margin: 4px 0 0 2px; }
    .pick span { position: relative; display: inline-flex; align-items: center; }
    select { appearance: none; height: 21px; padding: 0 13px 0 3px; border: 1px solid #ccc; border-radius: 3px; background: #fff; font-size: 12px; }
    .pick svg { position: absolute; right: 5px; pointer-events: none; }
  `];
  props: Prop[] = [
    { name: "AboutScreen", kind: "area" },
    { name: "AccentColor", kind: "color", value: "accent" },
    { name: "AlignHorizontal", kind: "pick", value: "Left : 1" },
    { name: "AlignVertical", kind: "pick", value: "Top : 1" },
    { name: "AppName", kind: "text", value: "smartfarmer" },
    { name: "BackgroundColor", kind: "color", value: "none" },
    { name: "BackgroundImage", kind: "text", value: "None..." },
    { name: "BigDefaultText", kind: "check" },
    { name: "BlocksToolkit", kind: "pick", value: "All" },
    { name: "CloseScreenAnimation", kind: "pick", value: "Default" },
  ];
  control(p: Prop) {
    switch (p.kind) {
      case "area": return html`<textarea id=${p.name}></textarea>`;
      case "color": return html`<button id=${p.name}><span class=${classMap({ chip: true, accent: p.value === "accent" })}></span>Default</button>`;
      case "text": return html`<input id=${p.name} type="text" .value=${p.value ?? ""}>`;
      case "check": return html`<input id=${p.name} type="checkbox">`;
      default: return html`<span><select id=${p.name}><option>${p.value}</option></select>${icons.caret}</span>`;
    }
  }
  render() {
    return html`
      <h2 class="title">Properties</h2>
      <div class="sub">Screen1</div>
      <div class="list">${this.props.map((p) => html`
        <div class="prop"><label class="name" for=${p.name}>${p.name}</label><div class=${p.kind}>${this.control(p)}</div></div>`)}
      </div>`;
  }
}

@customElement("task-bar")
class TaskBar extends LitElement {
  static styles = [base, css`
    :host { display: flex; flex: none; height: 37px; background: linear-gradient(90deg, #3d342c, #352a22 30%, #2d2622 50%, #211f1f 65%, #251f1c 78%, #38271f 88%, #231f1e 97%); font: 12px/16px "Open Sans", sans-serif; color: #f2f2f2; text-rendering: geometricPrecision; }
    .start { width: 45px; display: grid; place-items: center; }
    .search { flex: 0 1 322px; display: flex; align-items: center; gap: 10px; padding-left: 10px; background: #303030; border: 1px solid #484542; border-bottom: 0; overflow: hidden; }
    .search input { flex: 1; min-width: 0; border: 0; background: none; outline: 0; padding: 0; font-size: 13px; }
    .search input::placeholder { color: #d4d4d4; opacity: 1; }
    .apps { display: flex; }
    .app { width: 46px; display: grid; place-items: center; border-bottom: 3px solid transparent; position: relative; }
    .app::after { content: ""; position: absolute; left: 5px; right: 5px; bottom: -3px; height: 3px; }
    .app.open::after { background: #76b9ed; }
    .app.here { background: #574f4a; }
    .app.here::after { left: 0; right: 0; background: #76b9ed; }
    .tray { margin-left: auto; display: flex; align-items: center; padding-bottom: 2px; }
    .lang { width: 34px; font-size: 11px; padding-bottom: 2px; }
    .rain { display: flex; align-items: center; gap: 7px; font-size: 13px; width: 91px; }
    .sys { display: flex; align-items: center; gap: 8px; }
    .clock { width: 70px; text-align: center; font-size: 11px; line-height: 17px; }
    .alerts { position: relative; width: 44px; display: grid; place-items: center; }
    .count { position: absolute; right: 9px; bottom: -7px; width: 14px; height: 14px; border-radius: 7px; background: #3a3635; border: 1px solid #999; font-size: 10px; line-height: 12px; text-align: center; }
    .desk { width: 4px; align-self: stretch; border-left: 1px solid #5b5552; }
  `];
  apps: [string, string][] = [["taskview", ""], ["store", ""], ["pc", "open"], ["edge", ""], ["pycharm", ""], ["paint", ""], ["explorer", "open"], ["game", ""], ["chrome", "here"], ["notepad", ""], ["gear", "open"]];
  render() {
    return html`
      <button class="start" aria-label="Start">${icons.start}</button>
      <div class="search">${icons.search}<input aria-label="Search" placeholder="Type here to search">${icons.castle}</div>
      <div class="apps">${this.apps.map(([n, s]) => html`<button class=${classMap({ app: true, open: s === "open", here: s === "here" })} aria-label=${n}>${icons[n]}</button>`)}</div>
      <div class="tray">
        <span class="lang">EN</span>
        <button class="rain">${icons.umbrella}Rain...</button>
        <div class="sys">${icons.up}${icons.battery}${icons.volume}${icons.wifi}</div>
        <div class="clock">11:47 PM<br>11-11-2022</div>
        <button class="alerts" aria-label="Notifications">${icons.note}<span class="count">1</span></button>
      </div>
      <div class="desk"></div>`;
  }
}

@customElement("app-root")
class AppRoot extends LitElement {
  static styles = [base, css`
    :host { display: flex; flex-direction: column; height: 100vh; overflow: hidden; }
    .page { flex: 1; min-height: 0; display: flex; }
    .content {
      flex: 1; min-width: 0; display: flex; flex-direction: column; overflow: hidden;
      background: repeating-linear-gradient(90deg, #0000 0 2px, #00000005 2px 3px), repeating-linear-gradient(#0000 0 2px, #00000005 2px 3px), #e9e9e9;
    }
    .strip { flex: none; height: 10px; background: #f5f5f5; border: solid #d0d0d0; border-width: 0 1px 1px; }
    project-bar { flex: none; margin: 7px 7px 8px 8px; }
    .columns { flex: 1; min-height: 0; display: grid; grid-template-columns: 216px minmax(0, 1fr) 200px 200px; gap: 8px; padding: 0 12px; }
    components-panel { align-self: start; }
    .edge { width: 16px; --before: 14px; --thumb: 227px; }
  `];
  render() {
    return html`
      <browser-chrome></browser-chrome>
      <div class="page">
        <div class="content">
          <div class="strip"></div>
          <project-bar></project-bar>
          <div class="columns">
            <palette-panel></palette-panel>
            <viewer-panel></viewer-panel>
            <components-panel></components-panel>
            <properties-panel></properties-panel>
          </div>
        </div>
        <scroll-track class="edge"></scroll-track>
      </div>
      <task-bar></task-bar>`;
  }
}
